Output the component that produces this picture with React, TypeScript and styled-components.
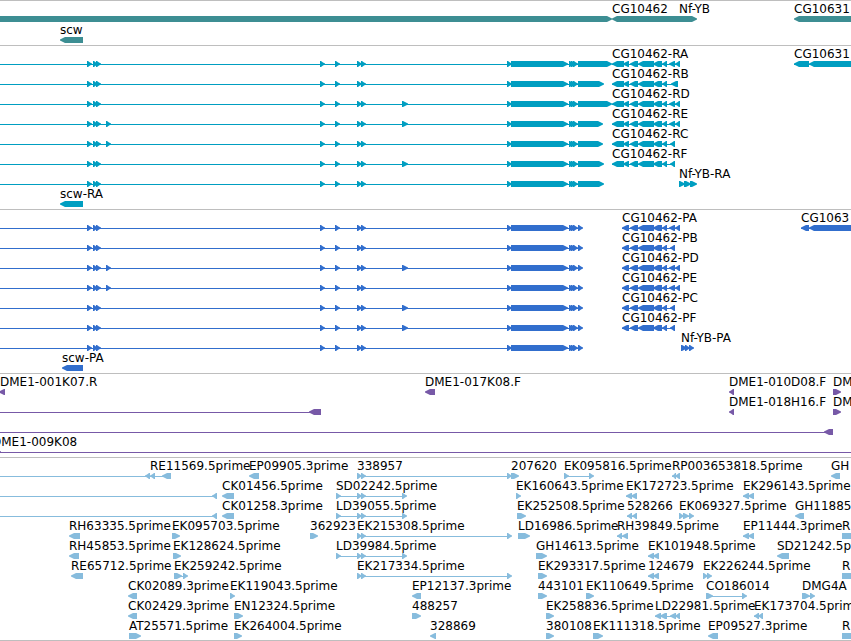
import React from "react";
import styled, { createGlobalStyle } from "styled-components";

type Strand = "+" | "-";
type Exon = [number, number];

interface Feature {
    exons : Array<Exon>;
    label? : string;
    labelAt? : number;
    strand : Strand;
}

interface TrackData {
    color : string;
    gap? : number;
    name : string;
    rows : Array<Array<Feature>>;
}

const HEAD = 5;
const TOP = 14;
const BOTTOM = 20;
const MIDDLE = 17;

const plus = (label : string, ...exons : Array<Exon>) : Feature => ({label, exons, strand : "+"});
const minus = (label : string, ...exons : Array<Exon>) : Feature => ({label, exons, strand : "-"});

// Start of the long gene, shared by all of its transcripts
const longStart : Array<Exon> = [[-20, -10], [87, 92], [93, 98], [96, 101]];
const longMiddle : Array<Exon> = [[320, 325], [335, 340], [357, 362], [361, 366]];
const longEnd : Array<Exon> = [[507, 512], [511, 568], [569, 574], [571, 576], [573, 578]];

const longForm = (last : Exon, early : boolean, late : boolean) : Feature => plus(
    "",
    ...longStart,
    ...(early ? [[106, 111] as Exon] : []),
    ...longMiddle,
    ...(late ? [[402, 408] as Exon] : []),
    ...longEnd,
    last
);

const cgMiddle : Array<Exon> = [[630, 638], [638, 654], [653, 662], [662, 667]];
const rna = (label : string, ...tail : Array<Exon>) => minus(label, [612, 624], [623, 629], ...cgMiddle, ...tail);
const protein = (label : string, ...tail : Array<Exon>) => minus(label, [622, 629], ...cgMiddle, ...tail);

const genes : TrackData = {
    color : "#3d8e93",
    gap : 1,
    name : "Genes",
    rows : [
        [plus("", [-20, 612]), minus("CG10462", [612, 681]), plus("Nf-YB", [679, 697]), minus("CG10631", [794, 900])],
        [minus("scw", [60, 83])],
    ],
};

const transcripts : TrackData = {
    color : "#009ec1",
    name : "Transcripts",
    rows : [
        [longForm([578, 612], false, false), rna("CG10462-RA", [669, 675], [675, 680]), minus("CG10631", [794, 809], [809, 900])],
        [longForm([578, 604], false, false), rna("CG10462-RB", [671, 678])],
        [longForm([578, 612], false, true), rna("CG10462-RD", [669, 675], [675, 680])],
        [longForm([578, 603], true, true), rna("CG10462-RE", [669, 675], [675, 680])],
        [longForm([578, 603], true, false), rna("CG10462-RC", [670, 675])],
        [longForm([578, 604], false, true), rna("CG10462-RF", [670, 675])],
        [longForm([578, 604], false, false), plus("Nf-YB-RA", [679, 685], [684, 691], [690, 697])],
        [minus("scw-RA", [60, 83])],
    ],
};

const proteins : TrackData = {
    color : "#316ecd",
    name : "Proteins",
    rows : [
        [longForm([578, 583], false, false), protein("CG10462-PA", [669, 675], [675, 680]), minus("CG1063", [801, 809], [809, 900])],
        [longForm([578, 583], false, false), protein("CG10462-PB", [670, 675])],
        [longForm([578, 583], true, true), protein("CG10462-PD", [669, 675], [675, 680])],
        [longForm([578, 583], true, false), protein("CG10462-PE", [669, 675], [675, 680])],
        [longForm([578, 583], false, true), protein("CG10462-PC", [670, 675])],
        [longForm([578, 583], false, true), protein("CG10462-PF", [670, 675])],
        [longForm([578, 583], false, false), plus("Nf-YB-PA", [681, 687], [685, 690], [689, 694])],
        [minus("scw-PA", [62, 83])],
    ],
};

const clones : TrackData = {
    color : "#7759a7",
    name : "Clones",
    rows : [
        [{...minus("DME1-001K07.R", [-1, 5]), labelAt : 0}, minus("DME1-017K08.F", [425, 435]), minus("DME1-010D08.F", [729, 734]), plus("DM", [833, 841])],
        [minus("", [-20, -10], [309, 321]), minus("DME1-018H16.F", [729, 734]), plus("DM", [833, 841])],
        [minus("", [-20, -10], [824, 833])],
        [{...plus("DME1-009K08", [-8, 1], [2000, 2010]), labelAt : -8}],
    ],
};

const cdnas : TrackData = {
    color : "#87bcdd",
    name : "cDNAs and ESTs",
    rows : [
        [
            {...minus("RE11569.5prime", [-20, -10], [145, 150], [150, 155], [162, 171]), labelAt : 150},
            minus("EP09905.3prime", [249, 259]),
            plus("338957", [357, 362], [361, 366], [507, 512]),
            plus("207620", [511, 519]),
            plus("EK095816.5prime", [564, 569], [589, 594]),
            minus("RP003653818.5prime", [672, 676], [675, 680]),
            minus("GH", [831, 840]),
        ],
        [
            minus("", [-20, -10], [212, 217]),
            minus("CK01456.5prime", [222, 234]),
            plus("SD02242.5prime", [336, 341], [357, 362], [361, 366], [402, 407]),
            plus("EK160643.5prime", [516, 521]),
            minus("EK172723.5prime", [626, 632], [631, 637]),
            minus("EK296143.5prime", [743, 749], [748, 754]),
        ],
        [
            minus("", [-20, -10], [212, 217]),
            minus("CK01258.3prime", [222, 234]),
            plus("LD39055.5prime", [336, 341], [357, 362], [361, 366], [402, 407]),
            plus("EK252508.5prime", [517, 526]),
            minus("528266", [627, 632], [632, 637]),
            plus("EK069327.5prime", [679, 684], [683, 689], [689, 694]),
            minus("GH11885", [795, 804]),
        ],
        [
            minus("RH63335.5prime", [69, 80]),
            plus("EK095703.5prime", [172, 180]),
            plus("362923", [310, 318]),
            plus("EK215308.5prime", [357, 362], [361, 366], [507, 512]),
            plus("LD16986.5prime", [518, 530]),
            minus("RH39849.5prime", [617, 622], [622, 628]),
            minus("EP11444.3prime", [743, 749], [748, 754]),
            plus("R", [842, 860]),
        ],
        [
            minus("RH45853.5prime", [69, 79]),
            plus("EK128624.5prime", [173, 181]),
            plus("LD39984.5prime", [336, 341], [357, 362], [361, 366], [402, 407]),
            plus("GH14613.5prime", [536, 547]),
            minus("EK101948.5prime", [648, 654], [653, 659]),
            minus("SD21242.5p", [777, 789]),
        ],
        [
            minus("RE65712.5prime", [71, 83]),
            plus("EK259242.5prime", [174, 182], [183, 188]),
            plus("EK217334.5prime", [357, 362], [361, 366], [507, 512]),
            plus("EK293317.5prime", [538, 547]),
            minus("124679", [648, 654], [653, 659]),
            plus("EK226244.5prime", [703, 708], [707, 712]),
            plus("R", [842, 860]),
        ],
        [
            minus("CK02089.3prime", [128, 137]),
            plus("EK119043.5prime", [230, 235]),
            minus("EP12137.3prime", [412, 421]),
            plus("443101", [538, 547]),
            plus("EK110649.5prime", [586, 594]),
            plus("CO186014", [706, 713], [742, 747]),
            plus("DMG4A", [802, 810], [810, 815]),
        ],
        [
            minus("CK02429.3prime", [128, 137]),
            plus("EN12324.5prime", [234, 243]),
            plus("488257", [412, 421]),
            plus("EK258836.5prime", [546, 554]),
            minus("LD22981.5prime", [655, 661], [660, 667], [670, 676], [675, 680]),
            minus("EK173704.5prim", [754, 759], [758, 763]),
        ],
        [
            plus("AT25571.5prime", [129, 141]),
            plus("EK264004.5prime", [234, 242]),
            minus("328869", [430, 436]),
            plus("380108", [546, 554]),
            plus("EK111318.5prime", [593, 603]),
            minus("EP09527.3prime", [708, 718]),
            plus("R", [842, 860]),
        ],
    ],
};

const tracks = [genes, transcripts, proteins, clones, cdnas];

// Arrow with a flat tail and slightly rounded shoulders, pointing along the strand
const exonPoints = ([start, end] : Exon, strand : Strand) => {
    const head = Math.min(HEAD, end - start - 1);
    const tail = strand === "+" ? start : end;
    const tip = strand === "+" ? end : start;
    const back = strand === "+" ? -1 : 1;
    const neck = tip + back * head;
    const shoulder = tip + back * 2;

    return [
        [tail, TOP],
        [neck, TOP],
        [shoulder, MIDDLE - 1.5],
        [tip, MIDDLE - 0.5],
        [tip, MIDDLE + 0.5],
        [shoulder, MIDDLE + 1.5],
        [neck, BOTTOM],
        [tail, BOTTOM],
    ].map((point) => point.join(",")).join(" ");
};

const FeatureGlyph = ({feature} : {feature : Feature}) => {
    const {exons, label, labelAt, strand} = feature;
    const first = exons[0][0];
    const last = exons[exons.length - 1][1];

    return (
        <g>
            {exons.length > 1 && <rect x={first} y={MIDDLE} width={last - first - 2} height={1} />}
            {exons.map((exon, index) => <polygon key={index} points={exonPoints(exon, strand)} />)}
            {label && <FeatureLabel x={labelAt ?? first} y={11}>{label}</FeatureLabel>}
        </g>
    );
};

const App = () => {
    return (
        <BrowserContainer>
            <GlobalStyle />
            {tracks.map((track) => (
                <Track key={track.name} $gap={track.gap ?? 0}>
                    {track.rows.map((row, index) => (
                        <FeatureRow key={index} $color={track.color}>
                            {row.map((feature, position) => <FeatureGlyph key={position} feature={feature} />)}
                        </FeatureRow>
                    ))}
                </Track>
            ))}
        </BrowserContainer>
    );
};

const GlobalStyle = createGlobalStyle`
    body{
        background: #ffffff;
        margin: 0;
    }
`;

const BrowserContainer = styled.main`
    width: 100%;

    overflow: hidden;
`;

const Track = styled.section<{$gap : number}>`
    border-top: 1px solid #bebebe;
    padding: 1px 0 2px;

    display: flex;
    flex-direction: column;
    gap: ${({$gap}) => $gap}px;

    &:last-child{
        border-bottom: 1px solid #bebebe;
        padding-bottom: 1px;
    }
`;

const FeatureRow = styled.svg<{$color : string}>`
    height: 20px;
    width: 100%;

    display: block;
    fill: ${({$color}) => $color};
`;

const FeatureLabel = styled.text`
    fill: #000000;
    font-family: "DejaVu Sans", sans-serif;
    font-size: 12px;
`;

export default App;
